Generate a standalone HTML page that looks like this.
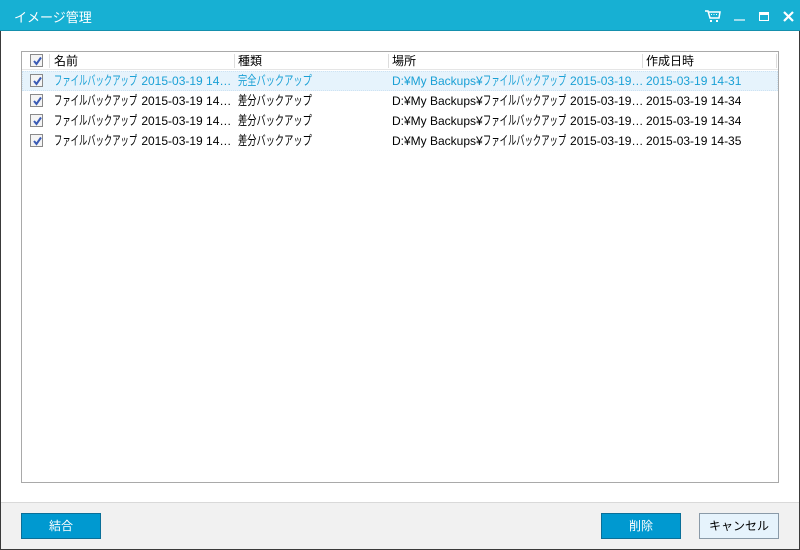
<!DOCTYPE html>
<html><head><meta charset="utf-8"><style>
*{margin:0;padding:0;box-sizing:border-box}
body{width:800px;height:550px;overflow:hidden;background:#fff;font-family:"Liberation Sans","Noto Sans CJK JP",sans-serif;font-size:12px;color:#000;position:relative}
.win{position:absolute;left:0;top:0;width:800px;height:550px;border:1px solid #3a3a3a;border-top:none}
.title{position:absolute;left:0;top:0;width:800px;height:31px;background:#17b0d3;border-bottom:1px solid #1590ad;color:#fff;font-size:13px}
.title span{position:absolute;left:14px;top:7px}
.list{position:absolute;left:21px;top:51px;width:758px;height:432px;border:1px solid #a9a9a9;background:#fff}
.hdr{position:absolute;left:0;top:0;width:756px;height:18px;background:#fff;border-bottom:1px solid #e5e5e5}
.row{position:absolute;left:0;height:20px;width:756px}
.sel{background:#e6f3fc;border:1px dotted #cfe3f3;color:#1aa0d5}
.c{position:absolute;top:1px;height:18px;line-height:18px;white-space:nowrap;overflow:hidden}
.sep{position:absolute;top:2px;width:1px;height:14px;background:#ddd}
.cb{position:absolute;left:8px;top:3px;width:13px;height:13px;border:1px solid #8a8a8a;background:#f4f4f4}
.cb svg{position:absolute;left:1px;top:1px}
.kw{display:inline-block;white-space:nowrap;height:18px;line-height:18px;vertical-align:top;position:relative}
.k{position:absolute;left:0;top:0;font-size:13px;line-height:18px;transform-origin:0 50%}
.footer{position:absolute;left:1px;top:502px;width:798px;height:47px;background:#f1f1f1;border-top:1px solid #d9d9d9}
.btn{position:absolute;top:513px;width:80px;height:26px;background:#0099d0;border:1px solid #0a6f98;color:#fff;text-align:center;line-height:24px;font-size:12px}
.btn2{background:#e6f3fc;border:1px solid #8a9aa8;color:#000}
</style></head><body>
<div class="win"></div>
<div class="title"><span>イメージ管理</span>
<svg style="position:absolute;left:705px;top:10px" width="16" height="13" viewBox="0 0 16 13"><path d="M0 1h3l2 7h9l1-6H4" fill="none" stroke="#fff" stroke-width="1.5"/><path d="M6 4.5h1M8.5 4.5h1M11 4.5h1" stroke="#fff"/><rect x="5" y="10" width="2" height="2" fill="#fff"/><rect x="11" y="10" width="2" height="2" fill="#fff"/></svg>
<div style="position:absolute;left:734px;top:19px;width:11px;height:2px;background:#9fdcec"></div>
<div style="position:absolute;left:759px;top:12px;width:10px;height:9px;border:1px solid #fff;border-top:3px solid #fff"></div>
<svg style="position:absolute;left:783px;top:11px" width="11" height="11" viewBox="0 0 11 11"><path d="M1 1L10 10M10 1L1 10" stroke="#fff" stroke-width="2.2"/></svg>
</div>
<div class="list">
<div class="hdr">
<div class="cb" style="top:2px"><svg width="11" height="11" viewBox="0 0 11 11"><path d="M2 5l2.5 3L9 1.5" fill="none" stroke="#3b5bb5" stroke-width="2"/></svg></div>
<div class="sep" style="left:27px"></div><div class="c" style="left:32px;top:0">名前</div>
<div class="sep" style="left:212px"></div><div class="c" style="left:216px;top:0">種類</div>
<div class="sep" style="left:366px"></div><div class="c" style="left:370px;top:0">場所</div>
<div class="sep" style="left:620px"></div><div class="c" style="left:624px;top:0">作成日時</div>
<div class="sep" style="left:754px"></div>
</div>

<div class="row sel" style="top:19px"><div class="cb" style="top:2px;left:7px"><svg width="11" height="11" viewBox="0 0 11 11"><path d="M2 5l2.5 3L9 1.5" fill="none" stroke="#3b5bb5" stroke-width="2"/></svg></div>
<div class="c" style="left:31px;top:0;width:180px"><span class="kw" style="width:84px"><span class="k" style="transform:scaleX(.64)">ファイルバックアップ</span></span> 2015-03-19 14…</div>
<div class="c" style="left:215px;top:0;width:150px"><span class="kw" style="width:74px"><span class="k" style="transform:scaleX(.71)">完全バックアップ</span></span></div>
<div class="c" style="left:369px;top:0;width:250px">D:¥My Backups¥<span class="kw" style="width:84px"><span class="k" style="transform:scaleX(.64)">ファイルバックアップ</span></span> 2015-03-19…</div>
<div class="c" style="left:623px;top:0">2015-03-19 14-31</div></div>

<div class="row" style="top:39px"><div class="cb"><svg width="11" height="11" viewBox="0 0 11 11"><path d="M2 5l2.5 3L9 1.5" fill="none" stroke="#3b5bb5" stroke-width="2"/></svg></div>
<div class="c" style="left:32px;width:180px"><span class="kw" style="width:84px"><span class="k" style="transform:scaleX(.64)">ファイルバックアップ</span></span> 2015-03-19 14…</div>
<div class="c" style="left:216px;width:150px"><span class="kw" style="width:74px"><span class="k" style="transform:scaleX(.71)">差分バックアップ</span></span></div>
<div class="c" style="left:370px;width:250px">D:¥My Backups¥<span class="kw" style="width:84px"><span class="k" style="transform:scaleX(.64)">ファイルバックアップ</span></span> 2015-03-19…</div>
<div class="c" style="left:624px">2015-03-19 14-34</div></div>

<div class="row" style="top:59px"><div class="cb"><svg width="11" height="11" viewBox="0 0 11 11"><path d="M2 5l2.5 3L9 1.5" fill="none" stroke="#3b5bb5" stroke-width="2"/></svg></div>
<div class="c" style="left:32px;width:180px"><span class="kw" style="width:84px"><span class="k" style="transform:scaleX(.64)">ファイルバックアップ</span></span> 2015-03-19 14…</div>
<div class="c" style="left:216px;width:150px"><span class="kw" style="width:74px"><span class="k" style="transform:scaleX(.71)">差分バックアップ</span></span></div>
<div class="c" style="left:370px;width:250px">D:¥My Backups¥<span class="kw" style="width:84px"><span class="k" style="transform:scaleX(.64)">ファイルバックアップ</span></span> 2015-03-19…</div>
<div class="c" style="left:624px">2015-03-19 14-34</div></div>

<div class="row" style="top:79px"><div class="cb"><svg width="11" height="11" viewBox="0 0 11 11"><path d="M2 5l2.5 3L9 1.5" fill="none" stroke="#3b5bb5" stroke-width="2"/></svg></div>
<div class="c" style="left:32px;width:180px"><span class="kw" style="width:84px"><span class="k" style="transform:scaleX(.64)">ファイルバックアップ</span></span> 2015-03-19 14…</div>
<div class="c" style="left:216px;width:150px"><span class="kw" style="width:74px"><span class="k" style="transform:scaleX(.71)">差分バックアップ</span></span></div>
<div class="c" style="left:370px;width:250px">D:¥My Backups¥<span class="kw" style="width:84px"><span class="k" style="transform:scaleX(.64)">ファイルバックアップ</span></span> 2015-03-19…</div>
<div class="c" style="left:624px">2015-03-19 14-35</div></div>
</div>
<div class="footer"></div>
<div class="btn" style="left:21px">結合</div>
<div class="btn" style="left:601px">削除</div>
<div class="btn btn2" style="left:699px">キャンセル</div>
</body></html>
